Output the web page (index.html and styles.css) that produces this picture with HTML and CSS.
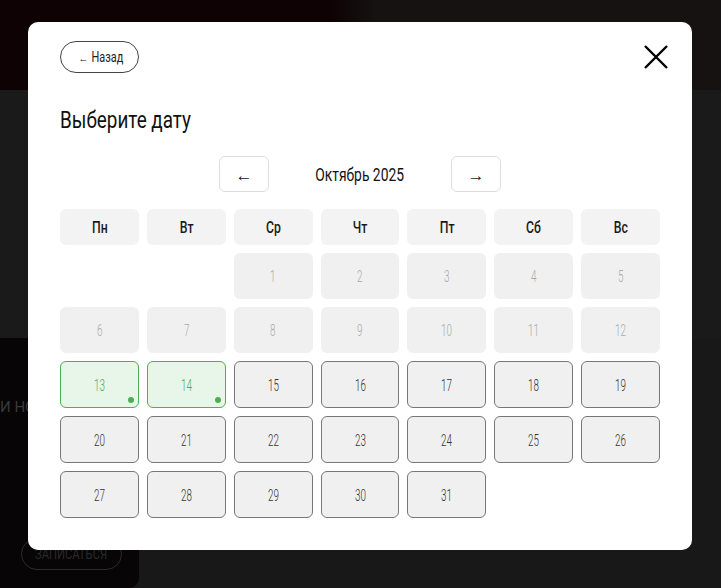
FILE: index.html
```html
<!DOCTYPE html>
<html lang="ru">
<head>
<meta charset="utf-8">
<link rel="stylesheet" href="styles.css">
</head>
<body>
<div class="page">
  <header class="topbar"></header>
  <section class="band"></section>
  <section class="lower">
    <div class="promo">
      <span class="promo-text">И НОГТИ</span>
      <span class="promo-btn"><span class="sx-btn">ЗАПИСАТЬСЯ</span></span>
    </div>
  </section>
</div>

<div class="modal">
  <div class="modal-top">
    <button class="back"><span class="arr-s">←</span><span class="sx-back">Назад</span></button>
    <button class="close" aria-label="Закрыть">
      <svg width="24" height="24" viewBox="0 0 24 24"><path d="M1 1L23 23M23 1L1 23" stroke="#000" stroke-width="2.4" fill="none"/></svg>
    </button>
  </div>
  <h2 class="title"><span class="sx-title">Выберите дату</span></h2>
  <div class="month-nav">
    <button class="nav-btn">←</button>
    <span class="month"><span class="sx-month">Октябрь 2025</span></span>
    <button class="nav-btn">→</button>
  </div>
  <div class="grid">
    <div class="wd"><span class="sx-wd">Пн</span></div><div class="wd"><span class="sx-wd">Вт</span></div><div class="wd"><span class="sx-wd">Ср</span></div><div class="wd"><span class="sx-wd">Чт</span></div><div class="wd"><span class="sx-wd">Пт</span></div><div class="wd"><span class="sx-wd">Сб</span></div><div class="wd"><span class="sx-wd">Вс</span></div>
    <div class="empty"></div><div class="empty"></div>
    <div class="day off"><span class="sx-d">1</span></div><div class="day off"><span class="sx-d">2</span></div><div class="day off"><span class="sx-d">3</span></div><div class="day off"><span class="sx-d">4</span></div><div class="day off"><span class="sx-d">5</span></div>
    <div class="day off"><span class="sx-d">6</span></div><div class="day off"><span class="sx-d">7</span></div><div class="day off"><span class="sx-d">8</span></div><div class="day off"><span class="sx-d">9</span></div><div class="day off"><span class="sx-d">10</span></div><div class="day off"><span class="sx-d">11</span></div><div class="day off"><span class="sx-d">12</span></div>
    <div class="day on free"><span class="sx-d">13</span></div><div class="day on free"><span class="sx-d">14</span></div><div class="day on"><span class="sx-d">15</span></div><div class="day on"><span class="sx-d">16</span></div><div class="day on"><span class="sx-d">17</span></div><div class="day on"><span class="sx-d">18</span></div><div class="day on"><span class="sx-d">19</span></div>
    <div class="day on"><span class="sx-d">20</span></div><div class="day on"><span class="sx-d">21</span></div><div class="day on"><span class="sx-d">22</span></div><div class="day on"><span class="sx-d">23</span></div><div class="day on"><span class="sx-d">24</span></div><div class="day on"><span class="sx-d">25</span></div><div class="day on"><span class="sx-d">26</span></div>
    <div class="day on"><span class="sx-d">27</span></div><div class="day on"><span class="sx-d">28</span></div><div class="day on"><span class="sx-d">29</span></div><div class="day on"><span class="sx-d">30</span></div><div class="day on"><span class="sx-d">31</span></div>
  </div>
</div>
</body>
</html>
```
FILE: styles.css
```css
* { box-sizing: border-box; }
html, body { margin: 0; padding: 0; }
body {
  width: 721px;
  height: 588px;
  overflow: hidden;
  background: #181818;
  font-family: Roboto, "Liberation Sans", sans-serif;
  position: relative;
}
.page { display: flex; flex-direction: column; height: 588px; }
.topbar {
  height: 90px;
  background: linear-gradient(90deg, #0e0204 0%, #0e0204 46%, #151211 52%, #151211 100%);
}
.band { height: 248px; background: #1a1a1a; }
.lower { flex: 1; display: flex; }
.promo {
  width: 139px;
  background: #070505;
  border-bottom-right-radius: 10px;
  display: flex;
  flex-direction: column;
  padding: 60px 0 18px 0;
  justify-content: space-between;
  overflow: hidden;
}
.promo-text { color: #3a3a3a; font-size: 15px; white-space: nowrap; }
.promo-btn {
  margin-left: 21px;
  width: 101px;
  height: 32px;
  border: 1px solid #2c2c2c;
  border-radius: 16px;
  color: #2a2a2a;
  font-size: 14px;
  display: flex;
  align-items: center;
  justify-content: center;
}
.sx-btn { display: inline-block; transform: scaleX(0.8); }

.modal {
  position: absolute;
  left: 28px;
  top: 22px;
  width: 664px;
  height: 528px;
  background: #fff;
  border-radius: 10px;
  padding: 19px 32px 32px 32px;
}
.modal-top { display: flex; justify-content: space-between; align-items: center; }
button { font-family: inherit; cursor: pointer; }
.back {
  height: 32px;
  width: 79px;
  border: 1px solid #444;
  border-radius: 16px;
  background: #fff;
  color: #222;
  font-size: 14px;
  padding: 0 0 0 2px;
  display: flex;
  align-items: center;
  justify-content: center;
  gap: 3px;
}
.arr-s { font-size: 11px; display: inline-block; transform: scaleX(0.9); margin-top: 3px; }
.sx-back { display: inline-block; transform: scaleX(0.78); margin: 0 -5px; }
.close {
  background: none;
  border: none;
  padding: 0;
  width: 24px;
  height: 24px;
  margin-right: -8px;
  display: block;
}
.close svg { display: block; }
.title {
  margin: 33px 0 20px 0;
  font-size: 23px;
  font-weight: 400;
  color: #111;
  line-height: 30px;
}
.sx-title { display: inline-block; transform: scaleX(0.82); transform-origin: left center; }
.month-nav {
  display: flex;
  justify-content: center;
  align-items: center;
  gap: 16px;
  margin-bottom: 17px;
}
.nav-btn {
  width: 50px;
  height: 36px;
  border: 1px solid #ddd;
  border-radius: 6px;
  background: #fff;
  font-size: 17px;
  color: #222;
  padding: 2px 0 0 0;
}
.month { width: 150px; text-align: center; font-size: 18px; color: #111; }
.sx-month { display: inline-block; transform: scaleX(0.77); }
.grid {
  display: grid;
  grid-template-columns: repeat(7, 1fr);
  gap: 8px 8px;
}
.wd {
  height: 36px;
  background: #f3f3f3;
  border-radius: 6px;
  display: flex;
  align-items: center;
  justify-content: center;
  font-size: 17px;
  font-weight: 500;
  color: #1a1a1a;
}
.sx-wd { display: inline-block; transform: scaleX(0.72); }
.day {
  height: 47px;
  border-radius: 6px;
  display: flex;
  align-items: center;
  justify-content: center;
  font-size: 17px;
  font-weight: 300;
  position: relative;
}
.sx-d { display: inline-block; transform: scaleX(0.58); }
.day.off { background: #f0f0f0; color: #aaa; height: 46px; }
.day.on { background: #f0f0f0; border: 1px solid #777; color: #333; }
.day.free { background: #e8f5e9; border-color: #4caf50; color: #4caf50; }
.day.free::after {
  content: "";
  position: absolute;
  right: 4px;
  bottom: 4px;
  width: 6px;
  height: 6px;
  border-radius: 50%;
  background: #4caf50;
}
```
